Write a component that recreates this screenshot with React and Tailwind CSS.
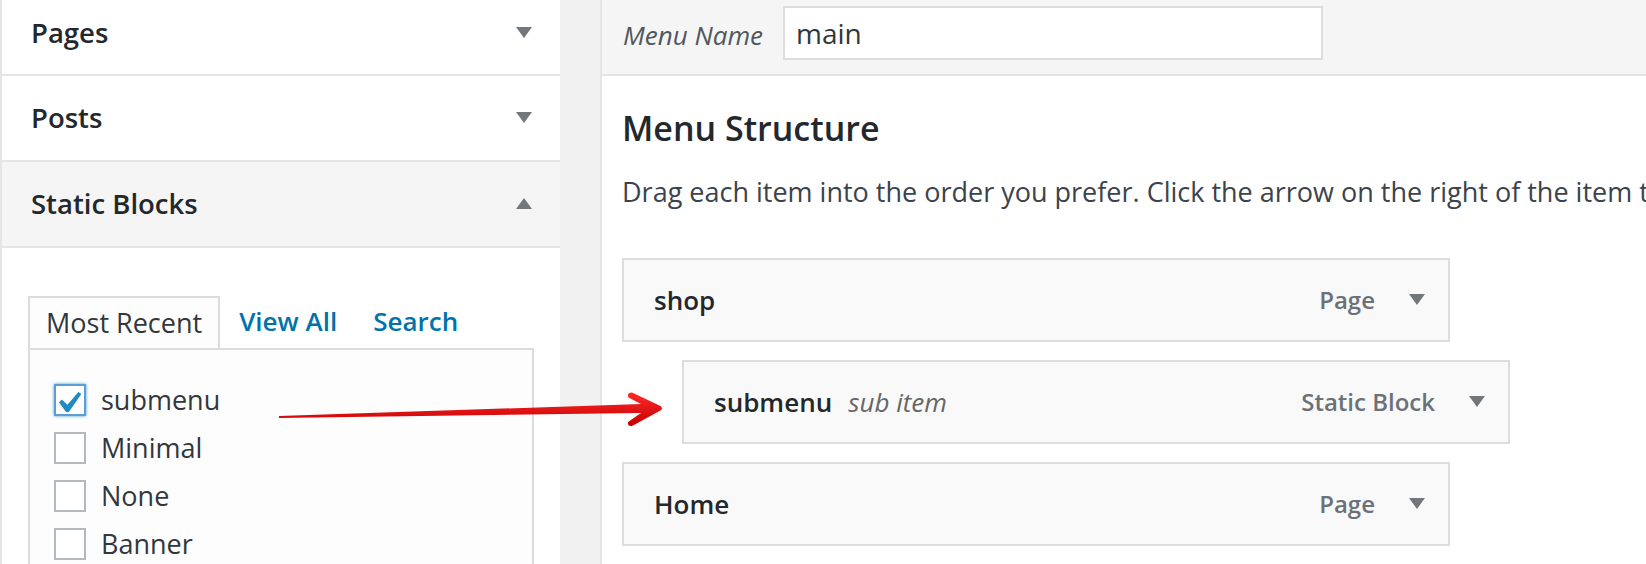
import { useState } from "react";

const sections = [
  { title: "Pages", open: false, first: true },
  { title: "Posts", open: false },
  { title: "Static Blocks", open: true },
];

const blocks = [
  { label: "submenu", checked: true },
  { label: "Minimal", checked: false },
  { label: "None", checked: false },
  { label: "Banner", checked: false },
];

const menuItems = [
  { title: "shop", type: "Page" },
  { title: "submenu", type: "Static Block", sub: true },
  { title: "Home", type: "Page" },
];

function Caret({ up = false }) {
  return (
    <svg width="16" height="12" viewBox="0 0 16 12" className="shrink-0">
      <polygon points={up ? "0,11 16,11 8,0" : "0,0 16,0 8,11"} fill="#72777c" />
    </svg>
  );
}

function Checkbox({ checked }) {
  return (
    <span
      className={
        checked
          ? "relative block h-8 w-8 shrink-0 border-2 border-[#5b9dd9] bg-white shadow-[0_0_3px_rgba(30,140,190,0.8)]"
          : "relative block h-8 w-8 shrink-0 border-2 border-[#b4b9be] bg-white"
      }
    >
      {checked && (
        <svg viewBox="4.4 2.1 13 13" className="absolute inset-0 h-full w-full">
          <path d="M14.83 4.89l1.34.94-5.81 8.38H9.02L5.78 9.67l1.34-1.25 2.57 2.4z" fill="#1e8cbe" />
        </svg>
      )}
    </span>
  );
}

// the red arrow pasted on top of the screenshot
function RedArrow() {
  return (
    <svg
      className="pointer-events-none absolute left-0 top-0"
      width="1646"
      height="564"
      viewBox="0 0 1646 564"
    >
      <defs>
        <linearGradient id="arrowRed" x1="0" y1="0" x2="0" y2="1">
          <stop offset="0" stopColor="#ff2a2a" />
          <stop offset="1" stopColor="#c40000" />
        </linearGradient>
      </defs>
      <path
        d="M279 416 L641 404 L628.5 397.5 Q626.5 392.5 632 392.5 L660.5 406 Q663.5 408.5 660.5 410.5 L633 425.5 Q627.5 427.5 628 422 L641 413 L279 418 Z"
        fill="url(#arrowRed)"
      />
    </svg>
  );
}

export default function App() {
  const [tab] = useState("recent");

  return (
    <div className="relative flex h-[564px] w-[1646px] overflow-hidden bg-[#f1f1f1] font-['Open_Sans',sans-serif]">
      {/* left column: add items */}
      <aside className="w-[560px] shrink-0 border-l-2 border-[#e5e5e5] bg-white">
        {sections.map((s) => (
          <div
            key={s.title}
            className={`flex items-center justify-between border-b-2 border-[#e5e5e5] pl-[29px] pr-[28px] ${
              s.first ? "h-[76px] pb-2" : "h-[86px]"
            } ${s.open ? "bg-[#f5f5f5]" : "bg-white"}`}
          >
            <h3 className="text-[27.5px] font-semibold leading-none text-[#23282d]">{s.title}</h3>
            <Caret up={s.open} />
          </div>
        ))}

        <div className="mx-[26px] mt-12">
          <div className="flex h-[52px]">
            <div
              className={`relative z-10 -mb-[2px] flex h-[52px] items-center border-2 border-b-0 border-[#dcdcdc] bg-[#fdfdfd] px-[16px] text-[27px] text-[#32373c] ${
                tab === "recent" ? "" : ""
              }`}
            >
              Most Recent
            </div>
            <a className="ml-[19px] flex items-center pb-[2px] text-[26px] font-semibold text-[#0073aa]">View All</a>
            <a className="ml-[36px] flex items-center pb-[2px] text-[26px] font-semibold text-[#0073aa]">Search</a>
          </div>
          <div className="h-[260px] border-2 border-[#dcdcdc] bg-[#fdfdfd] pl-6 pt-[34px]">
            <ul className="flex flex-col gap-4">
              {blocks.map((b) => (
                <li key={b.label} className="flex items-center gap-[15px]">
                  <Checkbox checked={b.checked} />
                  <span className="text-[27px] leading-8 text-[#32373c]">{b.label}</span>
                </li>
              ))}
            </ul>
          </div>
        </div>
      </aside>

      <div className="w-[40px] shrink-0" />

      {/* right column: menu editor */}
      <main className="min-w-0 flex-1 border-l-2 border-[#e5e5e5] bg-white">
        <div className="flex h-[76px] items-start border-b-2 border-[#e5e5e5] bg-[#f5f5f5] pl-[21px] pt-[6px]">
          <label className="flex h-[54px] items-center pt-1 text-[26px] italic text-[#50575e]">Menu Name</label>
          <input
            readOnly
            value="main"
            className="ml-[20px] h-[54px] w-[540px] border-2 border-[#dddddd] bg-white px-[11px] text-[28px] text-[#32373c] outline-none"
          />
        </div>

        <div className="pl-5">
          <h3 className="mt-[32px] text-[34px] font-semibold leading-[40px] text-[#23282d]">Menu Structure</h3>
          <p className="mt-[28px] whitespace-nowrap text-[27px] leading-8 text-[#3c434a]">
            Drag each item into the order you prefer. Click the arrow on the right of the item to reveal additional configuration options.
          </p>

          <ul className="mt-[50px] flex flex-col gap-[18px]">
            {menuItems.map((item) => (
              <li
                key={item.title}
                className={`flex h-[84px] w-[828px] items-center justify-between border-2 border-[#dddddd] bg-[#f9f9f9] pl-[30px] pr-[23px] ${
                  item.sub ? "ml-[60px]" : ""
                }`}
              >
                <div className="flex items-baseline gap-4">
                  <span className="text-[26px] font-semibold text-[#23282d]">{item.title}</span>
                  {item.sub && <span className="text-[26px] italic text-[#666]">sub item</span>}
                </div>
                <div className="flex items-center gap-[34px]">
                  <span className="text-[24px] font-semibold text-[#6c7177]">{item.type}</span>
                  <Caret />
                </div>
              </li>
            ))}
          </ul>
        </div>
      </main>

      <RedArrow />
    </div>
  );
}
